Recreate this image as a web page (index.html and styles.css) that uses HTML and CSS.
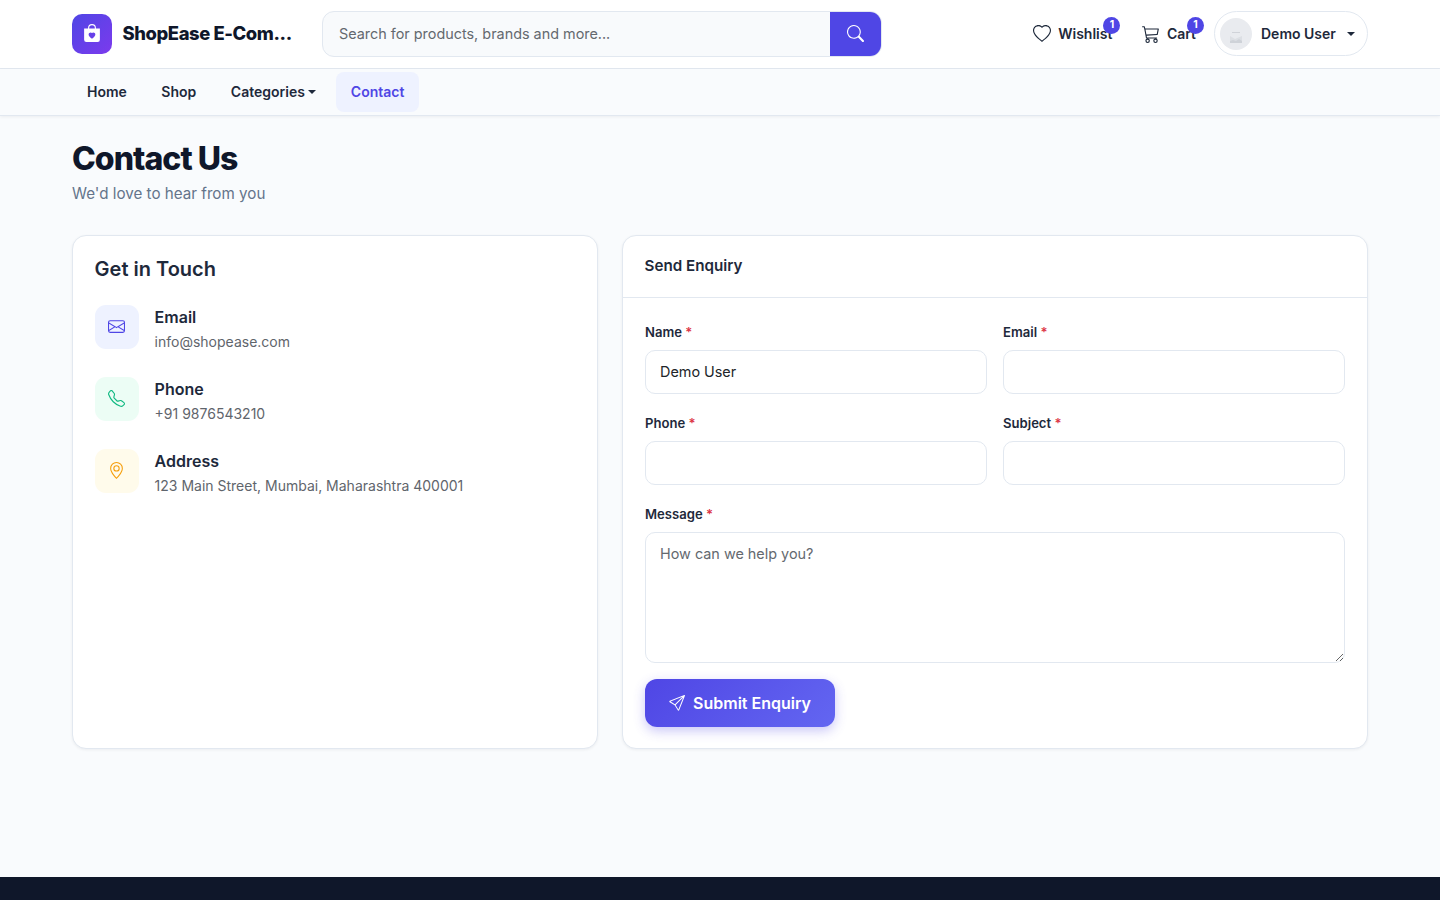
FILE: index.html
```html
<!DOCTYPE html>
<html lang="en">
<head>
  <meta charset="UTF-8">
  <meta name="viewport" content="width=device-width, initial-scale=1.0">
  <title>Contact Us - ShopEase E-Commerce</title>
  <link rel="stylesheet" href="styles.css">
</head>
<body>
  <header class="site-header">
    <div class="container header-row">
      <a href="#" class="brand">
        <span class="brand-icon">
          <svg class="icon" viewBox="0 0 16 16"><path d="M11.5 4v-.5a3.5 3.5 0 1 0-7 0V4H1v10a2 2 0 0 0 2 2h10a2 2 0 0 0 2-2V4zM8 1a2.5 2.5 0 0 1 2.5 2.5V4h-5v-.5A2.5 2.5 0 0 1 8 1m0 6.993c1.664-1.711 5.825 1.283 0 5.132-5.825-3.85-1.664-6.843 0-5.132"/></svg>
        </span>
        <span class="brand-name">ShopEase E-Com...</span>
      </a>
      <form class="search">
        <input type="text" class="search-input" placeholder="Search for products, brands and more...">
        <button type="button" class="search-btn" aria-label="Search">
          <svg class="icon" viewBox="0 0 16 16"><path d="M11.742 10.344a6.5 6.5 0 1 0-1.397 1.398h-.001q.044.06.098.115l3.85 3.85a1 1 0 0 0 1.415-1.414l-3.85-3.85a1 1 0 0 0-.115-.1zM12 6.5a5.5 5.5 0 1 1-11 0 5.5 5.5 0 0 1 11 0"/></svg>
        </button>
      </form>
      <div class="header-actions">
        <a href="#" class="action">
          <svg class="icon" viewBox="0 0 16 16"><path d="m8 2.748-.717-.737C5.6.281 2.514.878 1.4 3.053c-.523 1.023-.641 2.5.314 4.385.92 1.815 2.834 3.989 6.286 6.357 3.452-2.368 5.365-4.542 6.286-6.357.955-1.886.838-3.362.314-4.385C13.486.878 10.4.28 8.717 2.01zM8 15C-7.333 4.868 3.279-3.04 7.824 1.143q.09.083.176.171a3 3 0 0 1 .176-.17C12.72-3.042 23.333 4.867 8 15"/></svg>
          <span>Wishlist</span>
          <span class="badge">1</span>
        </a>
        <a href="#" class="action">
          <svg class="icon" viewBox="0 0 16 16"><path d="M0 1.5A.5.5 0 0 1 .5 1H2a.5.5 0 0 1 .485.379L2.89 3H14.5a.5.5 0 0 1 .49.598l-1 5a.5.5 0 0 1-.465.401l-9.397.472L4.415 11H13a.5.5 0 0 1 0 1H4a.5.5 0 0 1-.491-.408L2.01 3.607 1.61 2H.5a.5.5 0 0 1-.5-.5M3.102 4l.84 4.479 9.144-.459L13.89 4zM5 12a2 2 0 1 0 0 4 2 2 0 0 0 0-4m7 0a2 2 0 1 0 0 4 2 2 0 0 0 0-4m-7 1a1 1 0 1 1 0 2 1 1 0 0 1 0-2m7 0a1 1 0 1 1 0 2 1 1 0 0 1 0-2"/></svg>
          <span>Cart</span>
          <span class="badge">1</span>
        </a>
        <button type="button" class="user-menu">
          <span class="avatar">
            <svg viewBox="0 0 32 32"><path fill="#d0d3d9" d="M12 14h8v1h-8z"/><path fill="#dcdfe4" d="M10 18l5 3 7-3v7H10z"/><path fill="#ced2d8" d="M10 25v-2l3-1 3 1 3-2 3 2v2z"/></svg>
          </span>
          <span>Demo User</span>
          <span class="caret"></span>
        </button>
      </div>
    </div>
  </header>

  <nav class="main-nav">
    <div class="container nav-row">
      <a href="#" class="nav-link">Home</a>
      <a href="#" class="nav-link">Shop</a>
      <a href="#" class="nav-link">Categories<span class="caret"></span></a>
      <a href="#" class="nav-link active">Contact</a>
    </div>
  </nav>

  <main class="container page">
    <h1 class="page-title">Contact Us</h1>
    <p class="page-subtitle">We'd love to hear from you</p>

    <div class="contact-grid">
      <section class="card card-info">
        <h2 class="info-title">Get in Touch</h2>
        <div class="info-item">
          <div class="info-icon info-email">
            <svg class="icon" viewBox="0 0 16 16"><path d="M0 4a2 2 0 0 1 2-2h12a2 2 0 0 1 2 2v8a2 2 0 0 1-2 2H2a2 2 0 0 1-2-2zm2-1a1 1 0 0 0-1 1v.217l7 4.2 7-4.2V4a1 1 0 0 0-1-1zm13 2.383-4.708 2.825L15 11.105zm-.034 6.876-5.64-3.471L8 9.583l-1.326-.795-5.64 3.47A1 1 0 0 0 2 13h12a1 1 0 0 0 .966-.741M1 11.105l4.708-2.897L1 5.383z"/></svg>
          </div>
          <div>
            <h3>Email</h3>
            <p>info@shopease.com</p>
          </div>
        </div>
        <div class="info-item">
          <div class="info-icon info-phone">
            <svg class="icon" viewBox="0 0 16 16"><path d="M3.654 1.328a.678.678 0 0 0-1.015-.063L1.605 2.3c-.483.484-.661 1.169-.45 1.77a17.6 17.6 0 0 0 4.168 6.608 17.6 17.6 0 0 0 6.608 4.168c.601.211 1.286.033 1.77-.45l1.034-1.034a.678.678 0 0 0-.063-1.015l-2.307-1.794a.68.68 0 0 0-.58-.122l-2.19.547a1.75 1.75 0 0 1-1.657-.459L5.482 8.062a1.75 1.75 0 0 1-.46-1.657l.548-2.19a.68.68 0 0 0-.122-.58zM1.884.511a1.745 1.745 0 0 1 2.612.163L6.29 2.98c.329.423.445.974.315 1.494l-.547 2.19a.68.68 0 0 0 .178.643l2.457 2.457a.68.68 0 0 0 .644.178l2.189-.547a1.75 1.75 0 0 1 1.494.315l2.306 1.794c.829.645.905 1.87.163 2.611l-1.034 1.034c-.74.74-1.846 1.065-2.877.702a18.6 18.6 0 0 1-7.01-4.42 18.6 18.6 0 0 1-4.42-7.009c-.362-1.03-.037-2.137.703-2.877z"/></svg>
          </div>
          <div>
            <h3>Phone</h3>
            <p>+91 9876543210</p>
          </div>
        </div>
        <div class="info-item">
          <div class="info-icon info-address">
            <svg class="icon" viewBox="0 0 16 16"><path d="M12.166 8.94c-.524 1.062-1.234 2.12-1.96 3.07A32 32 0 0 1 8 14.58a32 32 0 0 1-2.206-2.57c-.726-.95-1.436-2.008-1.96-3.07C3.304 7.867 3 6.862 3 6a5 5 0 0 1 10 0c0 .862-.305 1.867-.834 2.94M8 16s6-5.686 6-10A6 6 0 0 0 2 6c0 4.314 6 10 6 10"/><path d="M8 8a2 2 0 1 1 0-4 2 2 0 0 1 0 4m0 1a3 3 0 1 0 0-6 3 3 0 0 0 0 6"/></svg>
          </div>
          <div>
            <h3>Address</h3>
            <p>123 Main Street, Mumbai, Maharashtra 400001</p>
          </div>
        </div>
      </section>

      <section class="card">
        <h2 class="card-header">Send Enquiry</h2>
        <form class="enquiry-form">
          <div class="field">
            <label for="name">Name <span class="required">*</span></label>
            <input type="text" id="name" class="form-control" value="Demo User">
          </div>
          <div class="field">
            <label for="email">Email <span class="required">*</span></label>
            <input type="email" id="email" class="form-control">
          </div>
          <div class="field">
            <label for="phone">Phone <span class="required">*</span></label>
            <input type="tel" id="phone" class="form-control">
          </div>
          <div class="field">
            <label for="subject">Subject <span class="required">*</span></label>
            <input type="text" id="subject" class="form-control">
          </div>
          <div class="field field-full">
            <label for="message">Message <span class="required">*</span></label>
            <textarea id="message" class="form-control" placeholder="How can we help you?"></textarea>
          </div>
          <button type="button" class="btn-submit">
            <svg class="icon" viewBox="0 0 16 16"><path d="M15.854.146a.5.5 0 0 1 .11.54l-5.819 14.547a.75.75 0 0 1-1.329.124l-3.178-4.995L.643 7.184a.75.75 0 0 1 .124-1.33L15.314.037a.5.5 0 0 1 .54.11ZM6.636 10.07l2.761 4.338L14.13 2.576zm6.787-8.201L1.591 6.602l4.339 2.76z"/></svg>
            <span>Submit Enquiry</span>
          </button>
        </form>
      </section>
    </div>
  </main>

  <footer class="site-footer"></footer>
</body>
</html>
```
FILE: styles.css
```css
* {
  box-sizing: border-box;
}
body {
  margin: 0;
  height: 100vh;
  overflow: hidden;
  display: flex;
  flex-direction: column;
  background: #f9fbfd;
  color: #1e293b;
  font-family: Inter, "Liberation Sans", sans-serif;
  font-size: 15px;
  line-height: 1.6;
}
h1, h2, h3, p {
  margin: 0;
}
a {
  color: inherit;
  text-decoration: none;
}
button, input, textarea {
  font-family: inherit;
}
.container {
  width: 1320px;
  margin: 0 auto;
  padding: 0 12px;
}
.icon {
  display: block;
  flex: none;
  width: 16px;
  height: 16px;
  fill: currentColor;
}
.caret {
  display: inline-block;
  border-top: 4.2px solid;
  border-left: 4.2px solid transparent;
  border-right: 4.2px solid transparent;
}

/* header */
.site-header {
  flex: none;
  height: 69px;
  background: #fff;
  border-bottom: 1px solid #e2e8f0;
}
.header-row {
  display: flex;
  align-items: center;
  height: 68px;
}
.brand {
  display: flex;
  align-items: center;
  gap: 10.5px;
  width: 250px;
}
.brand-icon {
  display: flex;
  align-items: center;
  justify-content: center;
  width: 40px;
  height: 40px;
  padding-bottom: 2px;
  border-radius: 10px;
  background: linear-gradient(135deg, #4f46e5, #7c3aed);
  color: #fff;
}
.brand-icon .icon {
  width: 18px;
  height: 18px;
}
.brand-name {
  color: #0f172a;
  font-size: 18.4px;
  font-weight: 800;
  letter-spacing: -0.4px;
  white-space: nowrap;
}
.search {
  display: flex;
  width: 560px;
  height: 46px;
  border: 1px solid #e2e8f0;
  border-radius: 12px;
  background: #f8fafc;
  overflow: hidden;
}
.search-input {
  flex: 1;
  padding: 0 16px 2px;
  border: 0;
  background: none;
  color: #1e293b;
  font-size: 14.4px;
}
.search-input::placeholder {
  color: #64696f;
}
.search-btn {
  display: flex;
  align-items: center;
  justify-content: center;
  width: 51px;
  padding: 0 0 2px;
  border: 0;
  background: #4f46e5;
  color: #fff;
}
.header-actions {
  display: flex;
  align-items: center;
  margin-left: auto;
}
.search-btn .icon {
  width: 17px;
  height: 17px;
}
.action {
  position: relative;
  display: flex;
  align-items: center;
  gap: 7px;
  margin-right: 29.5px;
  font-size: 14px;
  font-weight: 600;
}
.action + .action {
  margin-right: 18px;
}
.action .icon {
  width: 18px;
  height: 18px;
}
.badge {
  position: absolute;
  top: -6px;
  right: -8px;
  width: 17px;
  height: 17px;
  border-radius: 50%;
  background: #4f46e5;
  color: #fff;
  font-size: 10.4px;
  font-weight: 700;
  line-height: 15px;
  text-align: center;
}
.user-menu {
  display: flex;
  align-items: center;
  width: 154px;
  height: 45px;
  margin-bottom: 1px;
  padding: 0 12px 0 5px;
  border: 1px solid #e2e8f0;
  border-radius: 23px;
  background: #fff;
  color: #1e293b;
  font-size: 14px;
  font-weight: 600;
}
.user-menu .caret {
  margin-left: auto;
}
.avatar {
  width: 32px;
  height: 32px;
  margin-right: 9px;
  border-radius: 50%;
  background: #e9ebef;
}

/* navigation */
.main-nav {
  flex: none;
  height: 47px;
  background: #f9fbfd;
  border-bottom: 1px solid #e2e8f0;
  box-shadow: 0 1px 3px rgba(15, 23, 42, 0.06);
}
.nav-row {
  display: flex;
  align-items: center;
  gap: 4.5px;
  height: 46px;
}
.nav-link {
  display: flex;
  align-items: center;
  height: 40px;
  padding: 0 15px;
  border-radius: 8px;
  font-size: 14px;
  font-weight: 600;
}
.nav-link .caret {
  margin-left: 3.5px;
}
.nav-link.active {
  background: #eef2ff;
  color: #4f46e5;
}

/* contact page */
.page {
  flex: 1;
  padding-top: 24px;
}
.page-title {
  color: #0f172a;
  font-size: 32px;
  font-weight: 800;
  line-height: 38px;
  letter-spacing: -0.96px;
}
.page-subtitle {
  margin-top: 4px;
  color: #64748b;
  font-size: 15.2px;
  line-height: 24px;
}
.contact-grid {
  display: grid;
  grid-template-columns: 526px 746px;
  gap: 24px;
  height: 514px;
  margin-top: 29px;
}
.card {
  border: 1px solid #e2e8f0;
  border-radius: 14px;
  background: #fff;
  box-shadow: 0 1px 3px rgba(15, 23, 42, 0.06);
}
.card-info {
  padding: 21px 21.6px;
}
.info-title {
  margin-bottom: 24px;
  font-size: 20px;
  font-weight: 600;
  line-height: 24px;
}
.info-item {
  display: flex;
  gap: 16px;
  height: 48px;
  margin-bottom: 24px;
}
.info-item h3 {
  font-size: 16px;
  font-weight: 600;
  line-height: 24px;
}
.info-item p {
  margin-top: 2px;
  color: #5f656c;
  font-size: 14px;
  line-height: 22px;
}
.info-icon {
  display: flex;
  align-items: center;
  justify-content: center;
  width: 44px;
  height: 44px;
  padding-bottom: 1px;
  border-radius: 11px;
}
.info-icon .icon {
  width: 17px;
  height: 17px;
}
.info-email {
  background: #eef2ff;
  color: #4f46e5;
}
.info-phone {
  background: #ecfdf5;
  color: #10b981;
}
.info-address {
  background: #fffbeb;
  color: #f59e0b;
}
.card-header {
  height: 62px;
  padding: 18px 21.6px;
  border-bottom: 1px solid #e2e8f0;
  font-size: 15.2px;
  font-weight: 600;
  line-height: 24px;
}
.enquiry-form {
  display: grid;
  grid-template-columns: 1fr 1fr;
  gap: 17px 16px;
  padding: 22px 22px 21px;
}
.field label {
  display: block;
  height: 30px;
  font-size: 13.1px;
  font-weight: 600;
  line-height: 24px;
}
.field-full {
  grid-column: span 2;
}
.required {
  color: #dc3545;
}
.form-control {
  display: block;
  width: 100%;
  height: 44px;
  padding: 9px 14px 11px;
  border: 1px solid #e2e8f0;
  border-radius: 10px;
  background: #fff;
  color: #212529;
  font-size: 14.4px;
  line-height: 22px;
}
.form-control::placeholder {
  color: #64696f;
}
textarea.form-control {
  height: 131px;
  padding-top: 10px;
}
.btn-submit {
  display: flex;
  align-items: center;
  justify-content: center;
  gap: 8px;
  width: 190px;
  height: 48px;
  margin-top: -1px;
  padding: 0;
  border: 0;
  border-radius: 12px;
  background: linear-gradient(135deg, #4f46e5, #6366f1);
  box-shadow: 0 4px 12px rgba(79, 70, 229, 0.3);
  color: #fff;
  font-size: 16px;
  font-weight: 600;
}

.site-footer {
  flex: none;
  height: 23px;
  background: #0f172a;
}
```
